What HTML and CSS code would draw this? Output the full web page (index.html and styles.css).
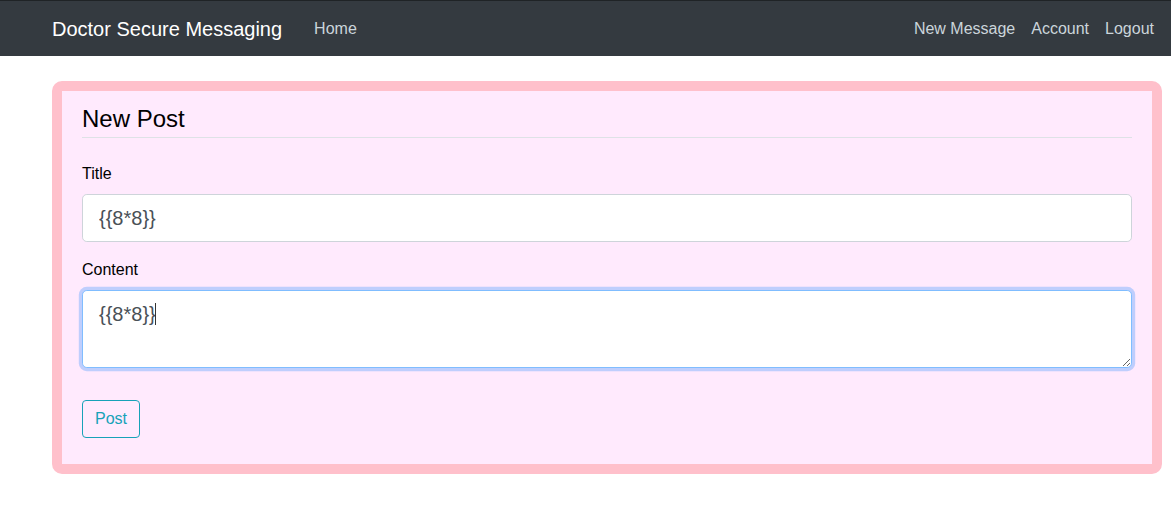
FILE: index.html
```html
<!DOCTYPE html>
<html lang="en">
<head>
<meta charset="utf-8">
<title>New Post - Doctor Secure Messaging</title>
<link rel="stylesheet" href="styles.css">
</head>
<body>
<header class="site-header">
  <nav class="navbar">
    <a class="navbar-brand" href="#">Doctor Secure Messaging</a>
    <div class="nav-left">
      <a class="nav-link" href="#">Home</a>
    </div>
    <div class="nav-right">
      <a class="nav-link" href="#">New Message</a>
      <a class="nav-link" href="#">Account</a>
      <a class="nav-link" href="#">Logout</a>
    </div>
  </nav>
</header>
<main class="page">
  <div class="content-section">
    <form class="post-form" action="#" method="post">
      <fieldset class="form-group">
        <legend class="section-title">New Post</legend>
        <div class="form-group">
          <label class="form-label" for="title">Title</label>
          <input class="form-control" id="title" name="title" type="text" value="{{8*8}}">
        </div>
        <div class="form-group">
          <label class="form-label" for="content">Content</label>
          <div class="textarea-wrap">
            <textarea class="form-control form-textarea is-focused" id="content" name="content" rows="2">{{8*8}}</textarea>
            <span class="caret"></span>
          </div>
        </div>
      </fieldset>
      <div class="form-group">
        <button class="btn-outline-info" type="submit">Post</button>
      </div>
    </form>
  </div>
</main>
</body>
</html>
```
FILE: styles.css
```css
* {
  box-sizing: border-box;
}

body {
  margin: 0;
  font-family: "Liberation Sans", Arial, sans-serif;
  font-size: 16px;
  line-height: 1.5;
  color: #212529;
  background: #fff;
}

a {
  text-decoration: none;
}

/* Top navigation bar */
.site-header {
  background: #343a40;
  border-top: 1px solid #1f2326;
}

.navbar {
  display: flex;
  align-items: center;
  height: 55px;
  padding: 0 9px 0 52px;
}

.navbar-brand {
  color: #fff;
  font-size: 20px;
  line-height: 30px;
  margin-right: 24px;
  white-space: nowrap;
}

.nav-left,
.nav-right {
  display: flex;
}

.nav-right {
  margin-left: auto;
}

.nav-link {
  color: #cbd5db;
  padding: 8px;
  line-height: 24px;
}

/* Page body */
.page {
  padding: 25px 9px 0 52px;
}

.content-section {
  background: #ffeafd;
  border: 10px solid #ffc0cb;
  border-radius: 10px;
  padding: 10px 20px;
}

.post-form {
  margin: 0;
}

fieldset.form-group {
  border: 0;
  margin: 0 0 16px;
  padding: 0;
  min-width: 0;
}

.form-group {
  margin-bottom: 16px;
}

.section-title {
  display: block;
  width: 100%;
  padding: 0;
  margin: 0 0 24px;
  font-size: 24px;
  line-height: 36px;
  color: #000;
  border-bottom: 1px solid #dee2e6;
}

.form-label {
  display: inline-block;
  margin-bottom: 8px;
  color: #000;
}

.form-control {
  display: block;
  width: 100%;
  height: 48px;
  padding: 8px 16px;
  font-family: inherit;
  font-size: 20px;
  line-height: 1.5;
  color: #495057;
  background: #fff;
  border: 1px solid #ced4da;
  border-radius: 4.8px;
  outline: none;
}

.textarea-wrap {
  position: relative;
}

.form-textarea {
  height: 78px;
  resize: vertical;
  overflow: auto;
}

.form-textarea.is-focused {
  border-color: #80bdff;
  box-shadow: 0 0 0 3.2px rgba(0, 123, 255, 0.25);
}

/* text cursor sitting after the typed value */
.caret {
  position: absolute;
  left: 73px;
  top: 13px;
  width: 1px;
  height: 22px;
  background: #333;
}

.btn-outline-info {
  display: inline-block;
  height: 38px;
  padding: 6px 12px;
  font-family: inherit;
  font-size: 16px;
  line-height: 24px;
  color: #17a2b8;
  background: transparent;
  border: 1px solid #17a2b8;
  border-radius: 4px;
  cursor: pointer;
}
```
